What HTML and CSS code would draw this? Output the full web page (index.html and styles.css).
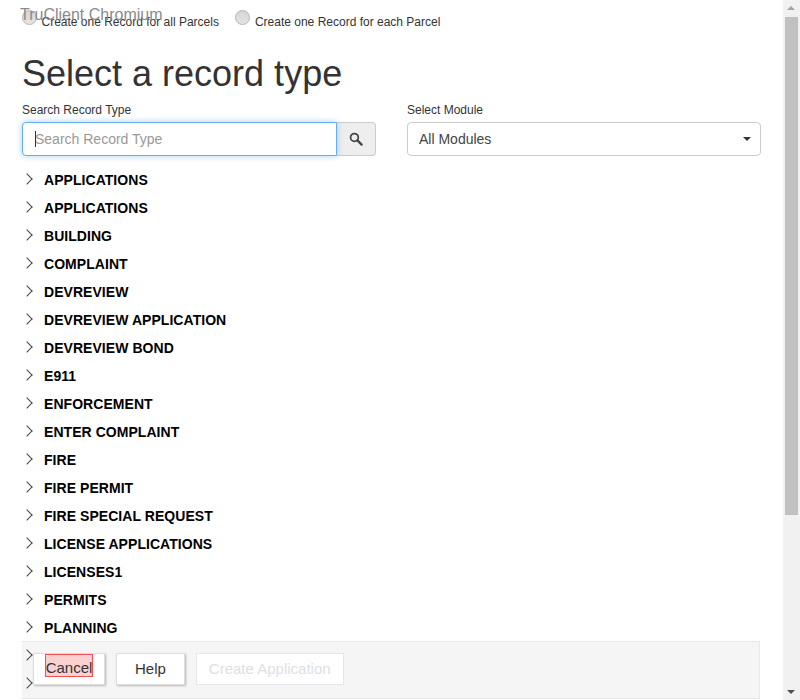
FILE: index.html
```html
<!DOCTYPE html>
<html lang="en">
<head>
    <meta charset="UTF-8">
    <title>Select a record type</title>
    <link rel="stylesheet" href="styles.css">
</head>
<body>
    <div class="page">
        <div class="watermark">TruClient Chromium</div>

        <div class="parcel-options">
            <label class="parcel-option"><input type="radio" name="parcel" class="radio">Create one Record for all Parcels</label>
            <label class="parcel-option"><input type="radio" name="parcel" class="radio">Create one Record for each Parcel</label>
        </div>

        <h1 class="title">Select a record type</h1>

        <div class="filters">
            <div class="filter">
                <label for="search" class="filter-label">Search Record Type</label>
                <div class="search-group">
                    <div class="search-box">
                        <input type="text" id="search" class="search-input" placeholder="Search Record Type">
                        <span class="caret"></span>
                    </div>
                    <button class="search-button" aria-label="Search">
                        <svg width="14" height="14" viewBox="0 0 16 16"><circle cx="6.2" cy="6.2" r="4.4" fill="none" stroke="#444" stroke-width="2"/><path d="M9.6 9.6L14.4 14.4" stroke="#444" stroke-width="2.6" stroke-linecap="round"/></svg>
                    </button>
                </div>
            </div>
            <div class="filter">
                <label for="module" class="filter-label">Select Module</label>
                <div class="select-box">
                    <select id="module" class="module-select">
                        <option>All Modules</option>
                    </select>
                    <span class="select-arrow"></span>
                </div>
            </div>
        </div>

        <ul class="record-list">
            <li class="record"><span class="chevron"></span><span>APPLICATIONS</span></li>
            <li class="record"><span class="chevron"></span><span>APPLICATIONS</span></li>
            <li class="record"><span class="chevron"></span><span>BUILDING</span></li>
            <li class="record"><span class="chevron"></span><span>COMPLAINT</span></li>
            <li class="record"><span class="chevron"></span><span>DEVREVIEW</span></li>
            <li class="record"><span class="chevron"></span><span>DEVREVIEW APPLICATION</span></li>
            <li class="record"><span class="chevron"></span><span>DEVREVIEW BOND</span></li>
            <li class="record"><span class="chevron"></span><span>E911</span></li>
            <li class="record"><span class="chevron"></span><span>ENFORCEMENT</span></li>
            <li class="record"><span class="chevron"></span><span>ENTER COMPLAINT</span></li>
            <li class="record"><span class="chevron"></span><span>FIRE</span></li>
            <li class="record"><span class="chevron"></span><span>FIRE PERMIT</span></li>
            <li class="record"><span class="chevron"></span><span>FIRE SPECIAL REQUEST</span></li>
            <li class="record"><span class="chevron"></span><span>LICENSE APPLICATIONS</span></li>
            <li class="record"><span class="chevron"></span><span>LICENSES1</span></li>
            <li class="record"><span class="chevron"></span><span>PERMITS</span></li>
            <li class="record"><span class="chevron"></span><span>PLANNING</span></li>
            <li class="record"><span class="chevron"></span></li>
            <li class="record"><span class="chevron"></span></li>
        </ul>

        <div class="action-bar">
            <button class="action-button"><span class="highlight">Cancel</span></button>
            <button class="action-button">Help</button>
            <button class="action-button action-button-disabled" disabled>Create Application</button>
        </div>
    </div>

    <div class="scrollbar">
        <span class="scroll-arrow scroll-arrow-up"></span>
        <div class="scroll-track"><div class="scroll-thumb"></div></div>
        <span class="scroll-arrow scroll-arrow-down"></span>
    </div>
</body>
</html>
```

FILE: styles.css
```css
html, body {
    height: 100%;
}

body {
    font-family: "Liberation Sans", Arial, sans-serif;
    color: #333;
    background-color: #fff;
    display: flex;
    height: 700px;
    margin: 0;
    overflow: hidden;
}

.page {
    position: relative;
    flex: 1;
    height: 700px;
    padding: 14px 0 0 22px;
    box-sizing: border-box;
    overflow: hidden;
}

.watermark {
    position: absolute;
    top: 6px;
    left: 20px;
    font-size: 16px;
    line-height: 18px;
    color: #8a8a8a;
    z-index: 3;
}

.parcel-options {
    display: flex;
    gap: 16.5px;
    height: 16px;
}

.parcel-option {
    display: flex;
    align-items: center;
    gap: 4.5px;
    font-size: 12px;
    line-height: 16px;
}

.radio {
    appearance: none;
    width: 15px;
    height: 15px;
    margin: 0;
    border: 1px solid #b5b5b5;
    border-radius: 50%;
    background: linear-gradient(#d6d6d6, #e4e4e4);
    box-sizing: border-box;
    position: relative;
    top: -5px;
}

.title {
    font-size: 36px;
    font-weight: normal;
    line-height: 40px;
    margin: 24px 0 0;
}

.filters {
    display: grid;
    grid-template-columns: 354px 354px;
    gap: 31px;
    margin-top: 9px;
}

.filter-label {
    display: block;
    font-size: 12px;
    line-height: 14px;
    margin-bottom: 5px;
}

.search-group {
    display: flex;
    height: 34px;
}

.search-box {
    position: relative;
    width: 315px;
}

.search-input {
    width: 100%;
    height: 34px;
    padding: 0 12px;
    font-family: inherit;
    font-size: 14px;
    color: #555;
    border: 1px solid #66afe9;
    border-radius: 4px 0 0 4px;
    box-shadow: 0 0 6px rgba(102, 175, 233, 0.6);
    box-sizing: border-box;
    outline: none;
}

.search-input::placeholder {
    color: #999;
}

.caret {
    position: absolute;
    top: 9px;
    left: 13px;
    width: 1px;
    height: 16px;
    background-color: #333;
}

.search-button {
    display: flex;
    align-items: center;
    justify-content: center;
    width: 39px;
    padding: 0;
    background-color: #eee;
    border: 1px solid #ccc;
    border-left: none;
    border-radius: 0 4px 4px 0;
}

.select-box {
    position: relative;
    height: 34px;
}

.module-select {
    appearance: none;
    width: 100%;
    height: 34px;
    padding: 0 11px;
    font-family: inherit;
    font-size: 14px;
    color: #444;
    background-color: #fff;
    border: 1px solid #ccc;
    border-radius: 4px;
}

.select-arrow {
    position: absolute;
    top: 15px;
    right: 10px;
    border-top: 4px solid #333;
    border-left: 4px solid transparent;
    border-right: 4px solid transparent;
}

.record-list {
    list-style: none;
    margin: 10px 0 0;
    padding: 0;
}

.record {
    display: flex;
    align-items: center;
    height: 28px;
    font-size: 14px;
    font-weight: bold;
    letter-spacing: 0.05px;
    color: #000;
}

.chevron {
    position: relative;
    z-index: 2;
    width: 8px;
    height: 8px;
    margin: -2px 13px 0 1px;
    border-top: 1px solid #444;
    border-right: 1px solid #444;
    transform: rotate(45deg);
    box-sizing: border-box;
    flex-shrink: 0;
}

.action-bar {
    position: absolute;
    left: 22px;
    top: 641px;
    width: 738px;
    height: 58px;
    display: flex;
    align-items: flex-start;
    gap: 11px;
    padding: 11px 0 0 11px;
    background-color: #f5f5f5;
    border: 1px solid #e8e8e8;
    border-width: 1px 1px 1px 0;
    box-sizing: border-box;
    z-index: 1;
}

.action-button {
    height: 32px;
    padding: 0 18px 2px;
    font-family: inherit;
    font-size: 15px;
    color: #333;
    background-color: #fff;
    border: 1px solid #ddd;
    box-shadow: 1px 1px 2px rgba(0, 0, 0, 0.25);
}

.action-button:first-child {
    padding: 0 11px;
}

.action-button-disabled {
    color: #dde0e6;
    border: 1px solid #e4e7ee;
    box-shadow: none;
    padding: 0 12px 2px;
}

.highlight {
    display: block;
    width: 48px;
    height: 23px;
    line-height: 27px;
    margin-top: -7px;
    box-sizing: border-box;
    background-color: rgba(240, 120, 120, 0.35);
    outline: 1px solid #f05050;
    outline-offset: -1px;
}

.scrollbar {
    width: 17px;
    height: 700px;
    background-color: #f1f1f1;
    display: flex;
    flex-direction: column;
    align-items: center;
    flex-shrink: 0;
}

.scroll-arrow {
    flex-shrink: 0;
    width: 17px;
    height: 17px;
    position: relative;
}

.scroll-arrow::after {
    content: "";
    position: absolute;
    left: 4px;
    border-left: 4px solid transparent;
    border-right: 4px solid transparent;
}

.scroll-arrow-up::after {
    top: 6px;
    border-bottom: 4px solid #a3a3a3;
}

.scroll-arrow-down::after {
    top: 7px;
    border-top: 4px solid #505050;
}

.scroll-track {
    flex: 1;
    width: 13px;
}

.scroll-thumb {
    height: 498px;
    background-color: #c1c1c1;
}
```
